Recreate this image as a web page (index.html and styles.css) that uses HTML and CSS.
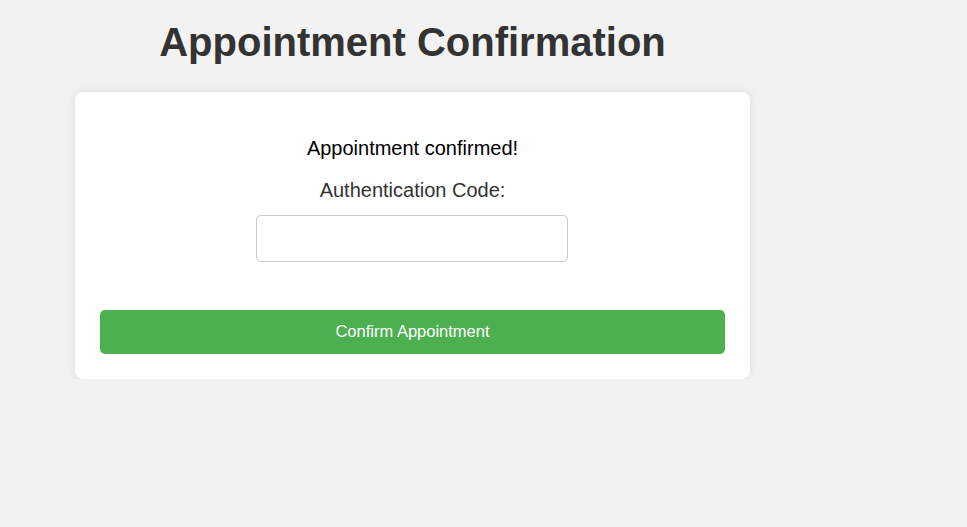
FILE: index.html
```html
<!DOCTYPE html>
<html lang="en">
<head>
<meta charset="utf-8">
<title>Appointment Confirmation</title>
<link rel="stylesheet" href="styles.css">
</head>
<body>
<div class="container">
  <h1 class="title">Appointment Confirmation</h1>
  <div class="card">
    <p class="message">Appointment confirmed!</p>
    <label class="label" for="code">Authentication Code:</label>
    <input class="code-input" id="code" type="text">
    <button class="confirm-btn" type="button">Confirm Appointment</button>
  </div>
</div>
</body>
</html>
```

FILE: styles.css
```css
html, body {
  margin: 0;
  padding: 0;
}
body {
  background: #f2f2f2;
  font-family: "Liberation Sans", Arial, sans-serif;
  color: #333;
}
.container {
  width: 675px;
  margin-left: 75px;
  padding-top: 19px;
}
.title {
  margin: 0 0 27px;
  font-size: 40px;
  font-weight: bold;
  text-align: center;
  color: #333;
  line-height: 46px;
}
.card {
  background: #fff;
  border-radius: 8px;
  box-shadow: 0 0 10px rgba(0, 0, 0, 0.1);
  padding: 25px;
  display: flex;
  flex-direction: column;
  align-items: center;
}
.message {
  margin: 20px 0 19px;
  font-size: 20px;
  line-height: 23px;
  color: #000;
}
.label {
  display: block;
  font-size: 20px;
  line-height: 23px;
  color: #333;
  margin-bottom: 13px;
}
.code-input {
  box-sizing: border-box;
  width: 312px;
  height: 47px;
  border: 1px solid #ccc;
  border-radius: 5px;
  padding: 10px;
  font-size: 16px;
  margin: 0 1px 48px 0;
  background: #fff;
}
.confirm-btn {
  width: 100%;
  height: 44px;
  border: none;
  border-radius: 5px;
  background: #4caf50;
  color: #fff;
  font-family: "Liberation Sans", Arial, sans-serif;
  font-size: 16.5px;
  padding: 0 0 1px;
  cursor: pointer;
}
```
